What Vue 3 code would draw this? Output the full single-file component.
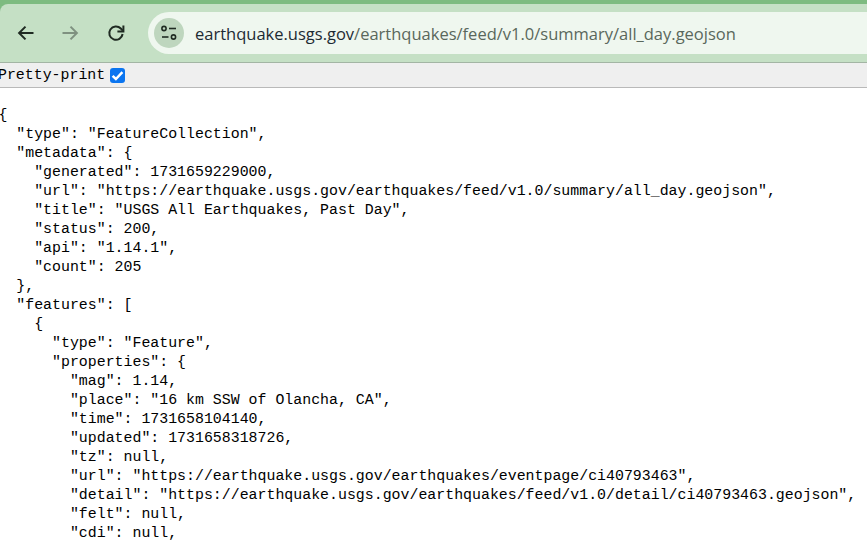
<script setup>
const lines = [
  '{',
  '  "type": "FeatureCollection",',
  '  "metadata": {',
  '    "generated": 1731659229000,',
  '    "url": "https://earthquake.usgs.gov/earthquakes/feed/v1.0/summary/all_day.geojson",',
  '    "title": "USGS All Earthquakes, Past Day",',
  '    "status": 200,',
  '    "api": "1.14.1",',
  '    "count": 205',
  '  },',
  '  "features": [',
  '    {',
  '      "type": "Feature",',
  '      "properties": {',
  '        "mag": 1.14,',
  '        "place": "16 km SSW of Olancha, CA",',
  '        "time": 1731658104140,',
  '        "updated": 1731658318726,',
  '        "tz": null,',
  '        "url": "https://earthquake.usgs.gov/earthquakes/eventpage/ci40793463",',
  '        "detail": "https://earthquake.usgs.gov/earthquakes/feed/v1.0/detail/ci40793463.geojson",',
  '        "felt": null,',
  '        "cdi": null,'
]
</script>

<template>
  <div class="page">
    <div class="chrome">
      <header class="toolbar">
        <button class="nav" aria-label="Back">
          <svg width="20" height="20" viewBox="0 0 20 20"><path d="M17.5 10H3.6M9.5 3.6 3.1 10l6.4 6.4" fill="none" stroke="#1f2a22" stroke-width="2"/></svg>
        </button>
        <button class="nav" aria-label="Forward">
          <svg width="20" height="20" viewBox="0 0 20 20"><path d="M2.5 10h13.9M10.5 3.6l6.4 6.4-6.4 6.4" fill="none" stroke="#7f9180" stroke-width="2"/></svg>
        </button>
        <button class="nav reload" aria-label="Reload">
          <svg width="20" height="20" viewBox="0 0 20 20"><path d="M16.6 11a6.7 6.7 0 1 1-1.8-5.5L16.8 7.6" fill="none" stroke="#1f2a22" stroke-width="2"/><path d="M17.4 2.6v6h-6" fill="none" stroke="#1f2a22" stroke-width="2"/></svg>
        </button>
        <div class="omnibox">
          <span class="site">
            <svg width="20" height="20" viewBox="0 0 20 20" fill="none" stroke="#1f2a22" stroke-width="1.6"><circle cx="5" cy="5.5" r="2.1"/><path d="M10 5.5h7"/><path d="M3 14h6.5"/><circle cx="14.5" cy="14" r="2.1"/></svg>
          </span>
          <span class="url"><span class="host">earthquake.usgs.gov</span>/earthquakes/feed/v1.0/summary/all_day.geojson</span>
        </div>
      </header>
    </div>
    <div class="printbar">
      <span class="print-label">Pretty-print</span>
      <span class="check">
        <svg width="15" height="15" viewBox="0 0 15 15"><path d="M2.6 7.8 5.9 11 12.4 4.2" fill="none" stroke="#fff" stroke-width="2.5"/></svg>
      </span>
    </div>
    <pre class="json"><template v-for="(l, i) in lines" :key="i">{{ l }}
</template></pre>
  </div>
</template>

<style>
html, body { margin: 0; background: #fff; overflow: hidden; }
</style>

<style scoped>
.page { width: 867px; height: 542px; overflow: hidden; background: #fff; }
.chrome { background: #7dbb80; padding-top: 4px; }
.toolbar {
  height: 58px;
  display: flex;
  align-items: center;
  padding-left: 6px;
  background: #c5e0c5;
  border-top-left-radius: 8px;
  border-bottom: 1px solid #a3b5a4;
}
.nav {
  width: 40px; height: 40px;
  padding: 0; border: 0; background: none;
  display: flex; align-items: center; justify-content: center;
  margin-right: 4px;
}
.reload { margin-left: 2px; margin-right: 0; }
.omnibox {
  flex: 1;
  height: 42px;
  margin-left: 12px;
  display: flex;
  align-items: center;
  background: #eff7ef;
  border-radius: 21px 0 0 21px;
  padding-left: 6px;
}
.site {
  width: 30px; height: 30px; border-radius: 50%;
  background: #bed6be;
  display: flex; align-items: center; justify-content: center;
}
.url {
  margin-left: 11px;
  font-family: "Open Sans", "Noto Sans", sans-serif;
  font-size: 16.5px;
  color: #5a675c;
  white-space: nowrap;
}
.host { color: #1d2a33; }
.printbar {
  height: 24px;
  background: #efefef;
  border-bottom: 1px solid #b9b9b9;
  display: flex;
  align-items: center;
  font-family: "Liberation Mono", monospace;
  font-size: 14.9px;
  color: #000;
  white-space: pre;
}
.print-label { margin-left: -2px; }
.check {
  width: 15px; height: 15px; margin-left: 5px;
  background: #0b75f0;
  border-radius: 3px;
  display: block;
}
.check svg { display: block; }
.json {
  margin: 0 0 0 -1.6px;
  padding-top: 18px;
  font-family: "Liberation Mono", monospace;
  font-size: 14.9px;
  line-height: 19px;
  color: #000;
}
</style>
